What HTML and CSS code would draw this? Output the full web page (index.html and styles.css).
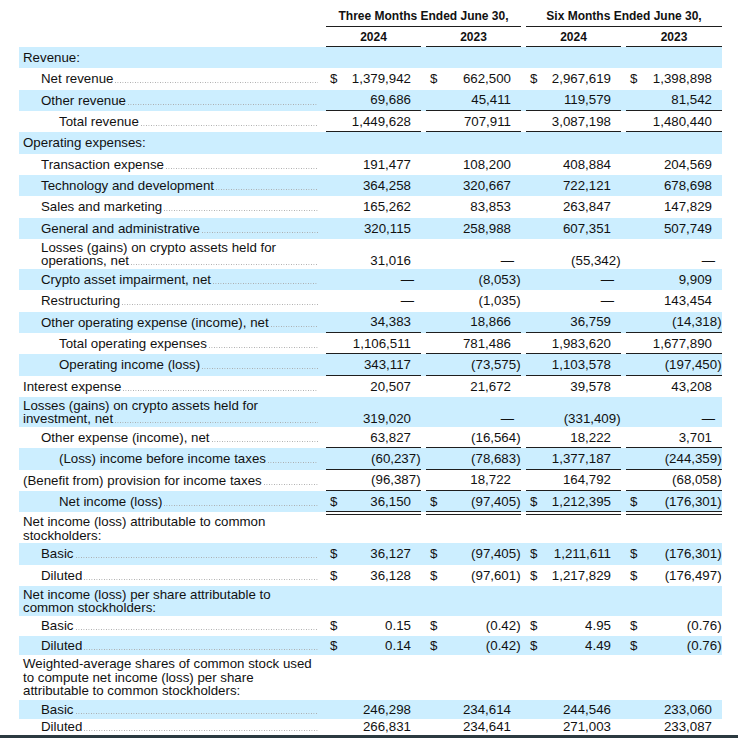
FILE: index.html
```html
<!DOCTYPE html>
<html>
<head>
<meta charset="utf-8">
<link rel="stylesheet" href="styles.css">
</head>
<body>
<div class="sheet">
  <div class="row hA">
    <div></div>
    <div class="hd span2">Three Months Ended June 30,</div>
    <div class="hd span2">Six Months Ended June 30,</div>
  </div>
  <div class="row hB">
    <div></div>
    <div class="hd">2024</div>
    <div class="hd">2023</div>
    <div class="hd">2024</div>
    <div class="hd">2023</div>
  </div>

  <div class="row blue">
    <div class="c lbl l0"><div class="ln"><span>Revenue:</span></div></div>
  </div>
  <div class="row">
    <div class="c lbl l1"><div class="ln"><span>Net revenue</span><i class="dots"></i></div></div>
    <div class="c v"><div class="ln"><span>$</span><span class="n">1,379,942</span></div></div>
    <div class="c v"><div class="ln"><span>$</span><span class="n">662,500</span></div></div>
    <div class="c v"><div class="ln"><span>$</span><span class="n">2,967,619</span></div></div>
    <div class="c v"><div class="ln"><span>$</span><span class="n">1,398,898</span></div></div>
  </div>
  <div class="row blue ul">
    <div class="c lbl l1"><div class="ln"><span>Other revenue</span><i class="dots"></i></div></div>
    <div class="c v"><div class="ln"><span class="n">69,686</span></div></div>
    <div class="c v"><div class="ln"><span class="n">45,411</span></div></div>
    <div class="c v"><div class="ln"><span class="n">119,579</span></div></div>
    <div class="c v"><div class="ln"><span class="n">81,542</span></div></div>
  </div>
  <div class="row ul">
    <div class="c lbl l2"><div class="ln"><span>Total revenue</span><i class="dots"></i></div></div>
    <div class="c v"><div class="ln"><span class="n">1,449,628</span></div></div>
    <div class="c v"><div class="ln"><span class="n">707,911</span></div></div>
    <div class="c v"><div class="ln"><span class="n">3,087,198</span></div></div>
    <div class="c v"><div class="ln"><span class="n">1,480,440</span></div></div>
  </div>
  <div class="row blue">
    <div class="c lbl l0"><div class="ln"><span>Operating expenses:</span></div></div>
  </div>
  <div class="row">
    <div class="c lbl l1"><div class="ln"><span>Transaction expense</span><i class="dots"></i></div></div>
    <div class="c v"><div class="ln"><span class="n">191,477</span></div></div>
    <div class="c v"><div class="ln"><span class="n">108,200</span></div></div>
    <div class="c v"><div class="ln"><span class="n">408,884</span></div></div>
    <div class="c v"><div class="ln"><span class="n">204,569</span></div></div>
  </div>
  <div class="row blue">
    <div class="c lbl l1"><div class="ln"><span>Technology and development</span><i class="dots"></i></div></div>
    <div class="c v"><div class="ln"><span class="n">364,258</span></div></div>
    <div class="c v"><div class="ln"><span class="n">320,667</span></div></div>
    <div class="c v"><div class="ln"><span class="n">722,121</span></div></div>
    <div class="c v"><div class="ln"><span class="n">678,698</span></div></div>
  </div>
  <div class="row">
    <div class="c lbl l1"><div class="ln"><span>Sales and marketing</span><i class="dots"></i></div></div>
    <div class="c v"><div class="ln"><span class="n">165,262</span></div></div>
    <div class="c v"><div class="ln"><span class="n">83,853</span></div></div>
    <div class="c v"><div class="ln"><span class="n">263,847</span></div></div>
    <div class="c v"><div class="ln"><span class="n">147,829</span></div></div>
  </div>
  <div class="row blue">
    <div class="c lbl l1"><div class="ln"><span>General and administrative</span><i class="dots"></i></div></div>
    <div class="c v"><div class="ln"><span class="n">320,115</span></div></div>
    <div class="c v"><div class="ln"><span class="n">258,988</span></div></div>
    <div class="c v"><div class="ln"><span class="n">607,351</span></div></div>
    <div class="c v"><div class="ln"><span class="n">507,749</span></div></div>
  </div>
  <div class="row m h30">
    <div class="c lbl l1"><div class="pre">Losses (gains) on crypto assets held for</div><div class="ln"><span>operations, net</span><i class="dots"></i></div></div>
    <div class="c v"><div class="ln"><span class="n">31,016</span></div></div>
    <div class="c v"><div class="ln"><span class="n dash">—</span></div></div>
    <div class="c v"><div class="ln"><span class="n neg">(55,342)</span></div></div>
    <div class="c v"><div class="ln"><span class="n dash">—</span></div></div>
  </div>
  <div class="row blue">
    <div class="c lbl l1"><div class="ln"><span>Crypto asset impairment, net</span><i class="dots"></i></div></div>
    <div class="c v"><div class="ln"><span class="n dash">—</span></div></div>
    <div class="c v"><div class="ln"><span class="n neg">(8,053)</span></div></div>
    <div class="c v"><div class="ln"><span class="n dash">—</span></div></div>
    <div class="c v"><div class="ln"><span class="n">9,909</span></div></div>
  </div>
  <div class="row">
    <div class="c lbl l1"><div class="ln"><span>Restructuring</span><i class="dots"></i></div></div>
    <div class="c v"><div class="ln"><span class="n dash">—</span></div></div>
    <div class="c v"><div class="ln"><span class="n neg">(1,035)</span></div></div>
    <div class="c v"><div class="ln"><span class="n dash">—</span></div></div>
    <div class="c v"><div class="ln"><span class="n">143,454</span></div></div>
  </div>
  <div class="row blue ul">
    <div class="c lbl l1"><div class="ln"><span>Other operating expense (income), net</span><i class="dots"></i></div></div>
    <div class="c v"><div class="ln"><span class="n">34,383</span></div></div>
    <div class="c v"><div class="ln"><span class="n">18,866</span></div></div>
    <div class="c v"><div class="ln"><span class="n">36,759</span></div></div>
    <div class="c v"><div class="ln"><span class="n neg">(14,318)</span></div></div>
  </div>
  <div class="row ul">
    <div class="c lbl l2"><div class="ln"><span>Total operating expenses</span><i class="dots"></i></div></div>
    <div class="c v"><div class="ln"><span class="n">1,106,511</span></div></div>
    <div class="c v"><div class="ln"><span class="n">781,486</span></div></div>
    <div class="c v"><div class="ln"><span class="n">1,983,620</span></div></div>
    <div class="c v"><div class="ln"><span class="n">1,677,890</span></div></div>
  </div>
  <div class="row blue ul">
    <div class="c lbl l2"><div class="ln"><span>Operating income (loss)</span><i class="dots"></i></div></div>
    <div class="c v"><div class="ln"><span class="n">343,117</span></div></div>
    <div class="c v"><div class="ln"><span class="n neg">(73,575)</span></div></div>
    <div class="c v"><div class="ln"><span class="n">1,103,578</span></div></div>
    <div class="c v"><div class="ln"><span class="n neg">(197,450)</span></div></div>
  </div>
  <div class="row">
    <div class="c lbl l0"><div class="ln"><span>Interest expense</span><i class="dots"></i></div></div>
    <div class="c v"><div class="ln"><span class="n">20,507</span></div></div>
    <div class="c v"><div class="ln"><span class="n">21,672</span></div></div>
    <div class="c v"><div class="ln"><span class="n">39,578</span></div></div>
    <div class="c v"><div class="ln"><span class="n">43,208</span></div></div>
  </div>
  <div class="row blue m h30">
    <div class="c lbl l0"><div class="pre">Losses (gains) on crypto assets held for</div><div class="ln"><span>investment, net</span><i class="dots"></i></div></div>
    <div class="c v"><div class="ln"><span class="n">319,020</span></div></div>
    <div class="c v"><div class="ln"><span class="n dash">—</span></div></div>
    <div class="c v"><div class="ln"><span class="n neg">(331,409)</span></div></div>
    <div class="c v"><div class="ln"><span class="n dash">—</span></div></div>
  </div>
  <div class="row ul">
    <div class="c lbl l1"><div class="ln"><span>Other expense (income), net</span><i class="dots"></i></div></div>
    <div class="c v"><div class="ln"><span class="n">63,827</span></div></div>
    <div class="c v"><div class="ln"><span class="n neg">(16,564)</span></div></div>
    <div class="c v"><div class="ln"><span class="n">18,222</span></div></div>
    <div class="c v"><div class="ln"><span class="n">3,701</span></div></div>
  </div>
  <div class="row blue ul">
    <div class="c lbl l2"><div class="ln"><span>(Loss) income before income taxes</span><i class="dots"></i></div></div>
    <div class="c v"><div class="ln"><span class="n neg">(60,237)</span></div></div>
    <div class="c v"><div class="ln"><span class="n neg">(78,683)</span></div></div>
    <div class="c v"><div class="ln"><span class="n">1,377,187</span></div></div>
    <div class="c v"><div class="ln"><span class="n neg">(244,359)</span></div></div>
  </div>
  <div class="row ul">
    <div class="c lbl l0"><div class="ln"><span>(Benefit from) provision for income taxes</span><i class="dots"></i></div></div>
    <div class="c v"><div class="ln"><span class="n neg">(96,387)</span></div></div>
    <div class="c v"><div class="ln"><span class="n">18,722</span></div></div>
    <div class="c v"><div class="ln"><span class="n">164,792</span></div></div>
    <div class="c v"><div class="ln"><span class="n neg">(68,058)</span></div></div>
  </div>
  <div class="row blue dbl">
    <div class="c lbl l2"><div class="ln"><span>Net income (loss)</span><i class="dots"></i></div></div>
    <div class="c v"><div class="ln"><span>$</span><span class="n">36,150</span></div></div>
    <div class="c v"><div class="ln"><span>$</span><span class="n neg">(97,405)</span></div></div>
    <div class="c v"><div class="ln"><span>$</span><span class="n">1,212,395</span></div></div>
    <div class="c v"><div class="ln"><span>$</span><span class="n neg">(176,301)</span></div></div>
  </div>
  <div class="row m h31">
    <div class="c lbl l0"><div class="pre">Net income (loss) attributable to common</div><div class="ln"><span>stockholders:</span></div></div>
  </div>
  <div class="row blue">
    <div class="c lbl l1"><div class="ln"><span>Basic</span><i class="dots"></i></div></div>
    <div class="c v"><div class="ln"><span>$</span><span class="n">36,127</span></div></div>
    <div class="c v"><div class="ln"><span>$</span><span class="n neg">(97,405)</span></div></div>
    <div class="c v"><div class="ln"><span>$</span><span class="n">1,211,611</span></div></div>
    <div class="c v"><div class="ln"><span>$</span><span class="n neg">(176,301)</span></div></div>
  </div>
  <div class="row">
    <div class="c lbl l1"><div class="ln"><span>Diluted</span><i class="dots"></i></div></div>
    <div class="c v"><div class="ln"><span>$</span><span class="n">36,128</span></div></div>
    <div class="c v"><div class="ln"><span>$</span><span class="n neg">(97,601)</span></div></div>
    <div class="c v"><div class="ln"><span>$</span><span class="n">1,217,829</span></div></div>
    <div class="c v"><div class="ln"><span>$</span><span class="n neg">(176,497)</span></div></div>
  </div>
  <div class="row blue m h30">
    <div class="c lbl l0"><div class="pre">Net income (loss) per share attributable to</div><div class="ln"><span>common stockholders:</span></div></div>
  </div>
  <div class="row h20">
    <div class="c lbl l1"><div class="ln"><span>Basic</span><i class="dots"></i></div></div>
    <div class="c v"><div class="ln"><span>$</span><span class="n">0.15</span></div></div>
    <div class="c v"><div class="ln"><span>$</span><span class="n neg">(0.42)</span></div></div>
    <div class="c v"><div class="ln"><span>$</span><span class="n">4.95</span></div></div>
    <div class="c v"><div class="ln"><span>$</span><span class="n neg">(0.76)</span></div></div>
  </div>
  <div class="row blue h19">
    <div class="c lbl l1"><div class="ln"><span>Diluted</span><i class="dots"></i></div></div>
    <div class="c v"><div class="ln"><span>$</span><span class="n">0.14</span></div></div>
    <div class="c v"><div class="ln"><span>$</span><span class="n neg">(0.42)</span></div></div>
    <div class="c v"><div class="ln"><span>$</span><span class="n">4.49</span></div></div>
    <div class="c v"><div class="ln"><span>$</span><span class="n neg">(0.76)</span></div></div>
  </div>
  <div class="row m h45">
    <div class="c lbl l0"><div class="pre">Weighted-average shares of common stock used</div><div class="pre">to compute net income (loss) per share</div><div class="ln"><span>attributable to common stockholders:</span></div></div>
  </div>
  <div class="row blue h19">
    <div class="c lbl l1"><div class="ln"><span>Basic</span><i class="dots"></i></div></div>
    <div class="c v"><div class="ln"><span class="n">246,298</span></div></div>
    <div class="c v"><div class="ln"><span class="n">234,614</span></div></div>
    <div class="c v"><div class="ln"><span class="n">244,546</span></div></div>
    <div class="c v"><div class="ln"><span class="n">233,060</span></div></div>
  </div>
  <div class="row h16">
    <div class="c lbl l1"><div class="ln"><span>Diluted</span><i class="dots"></i></div></div>
    <div class="c v"><div class="ln"><span class="n">266,831</span></div></div>
    <div class="c v"><div class="ln"><span class="n">234,641</span></div></div>
    <div class="c v"><div class="ln"><span class="n">271,003</span></div></div>
    <div class="c v"><div class="ln"><span class="n">233,087</span></div></div>
  </div>
</div>
<div class="edge"></div>
</body>
</html>
```

FILE: styles.css
```css
html, body {
  margin: 0;
  padding: 0;
  background: #ffffff;
}
body {
  width: 738px;
  height: 738px;
  overflow: hidden;
  font-family: "Liberation Sans", Arial, sans-serif;
  font-size: 13.3px;
  color: #111111;
}
.sheet {
  padding-left: 19px;
  width: 703px;
}
.row {
  display: grid;
  grid-template-columns: 302px 95px 95px 95px 96px;
  column-gap: 5px;
  height: 21.33px;
}
.blue {
  background: #cceeff;
}
.c {
  display: flex;
  flex-direction: column;
  justify-content: center;
  line-height: 13px;
  min-width: 0;
}
.m .c {
  justify-content: flex-end;
  line-height: 13.5px;
  padding-bottom: 1px;
}
.h30 { height: 30px; }
.h31 { height: 31px; }
.h45 { height: 45px; }
.h20 { height: 20px; }
.h19 { height: 19px; }
.h16 { height: 16px; }
.h45 .c { padding-bottom: 2px; }

.ln {
  display: flex;
  align-items: baseline;
  white-space: nowrap;
}
.lbl .ln {
  padding-right: 3px;
}
.l0 { padding-left: 4px; }
.l1 { padding-left: 22px; }
.l2 { padding-left: 40px; }
.pre {
  white-space: nowrap;
}
.dots {
  flex: 1;
  height: 1px;
  margin-left: 2px;
  background-image: linear-gradient(to right, #a8a8a8 1px, transparent 1px);
  background-size: 2.5px 1px;
  background-repeat: repeat-x;
}
.v .ln {
  padding: 0 10px 0 4px;
}
.v .n {
  margin-left: auto;
}
.v .n.neg {
  margin-right: -9.6px;
}
.v .n.dash {
  margin-right: -3px;
}
.ul .v {
  border-bottom: 1px solid #1e1e1e;
}
.dbl .v {
  border-bottom: 4px double #1e1e1e;
  margin-bottom: -3px;
}

/* header */
.hA { height: 27px; }
.hB { height: 20px; }
.hd {
  display: flex;
  flex-direction: column;
  justify-content: flex-end;
  text-align: center;
  font-weight: bold;
  font-size: 12px;
  line-height: 13px;
  border-bottom: 1px solid #1e1e1e;
}
.hA .hd { padding-bottom: 3px; }
.hB .hd { padding-bottom: 2px; }
.span2 { grid-column: span 2; }

.edge {
  height: 3px;
  background: #2b3a40;
}
```
